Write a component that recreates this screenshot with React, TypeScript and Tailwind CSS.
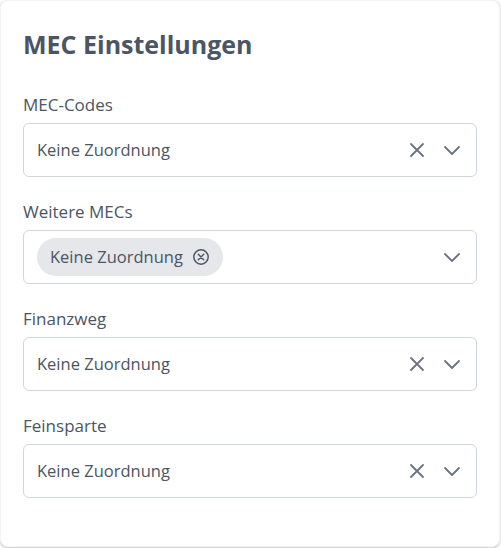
import React from 'react';

const XIcon = () => (
  <svg width="20" height="20" viewBox="0 0 20 20" fill="none" stroke="#6b7280" strokeWidth="1.8" strokeLinecap="round">
    <path d="M4 4l12 12M16 4L4 16" />
  </svg>
);

const Chevron = () => (
  <svg width="20" height="20" viewBox="0 0 20 20" fill="none" stroke="#6b7280" strokeWidth="1.8" strokeLinecap="round" strokeLinejoin="round">
    <path d="M3 7l7 7 7-7" />
  </svg>
);

const CircleX = () => (
  <svg width="18" height="18" viewBox="0 0 20 20" fill="none" stroke="#4b5563" strokeWidth="1.6" strokeLinecap="round">
    <circle cx="10" cy="10" r="8" />
    <path d="M7 7l6 6M13 7l-6 6" />
  </svg>
);

type Field = { label: string; chip?: boolean };

const fields: Field[] = [
  { label: 'MEC-Codes' },
  { label: 'Weitere MECs', chip: true },
  { label: 'Finanzweg' },
  { label: 'Feinsparte' },
];

export default function App() {
  return (
    <div className="w-[501px] h-[548px] bg-white" style={{ fontFamily: '"Open Sans", "Noto Sans", sans-serif' }}>
      <div className="w-[500px] h-[547px] bg-white rounded-lg border border-gray-100 shadow-[0_1px_3px_rgba(0,0,0,0.25)] px-[22px] pt-[24px]">
        <h2 className="text-[25px] leading-[38px] font-bold text-[#4b5563]">MEC Einstellungen</h2>
        <div className="mt-[30px] flex flex-col gap-[23px]">
          {fields.map((f) => (
            <div key={f.label}>
              <div className="text-[17px] leading-6 text-[#4b5563] mb-[6px]">{f.label}</div>
              <div className="h-[54px] border border-gray-300 rounded-md flex items-center pl-[13px] pr-[14px]">
                {f.chip ? (
                  <div className="h-[38px] rounded-full bg-[#e5e7eb] flex items-center pl-[13px] pr-[13px] gap-[9px] text-[16.5px] text-[#4b5563]">
                    Keine Zuordnung
                    <CircleX />
                  </div>
                ) : (
                  <span className="text-[16.5px] text-[#4b5563]">Keine Zuordnung</span>
                )}
                <div className="ml-auto flex items-center gap-[15px]">
                  {!f.chip && <XIcon />}
                  <Chevron />
                </div>
              </div>
            </div>
          ))}
        </div>
      </div>
    </div>
  );
}
